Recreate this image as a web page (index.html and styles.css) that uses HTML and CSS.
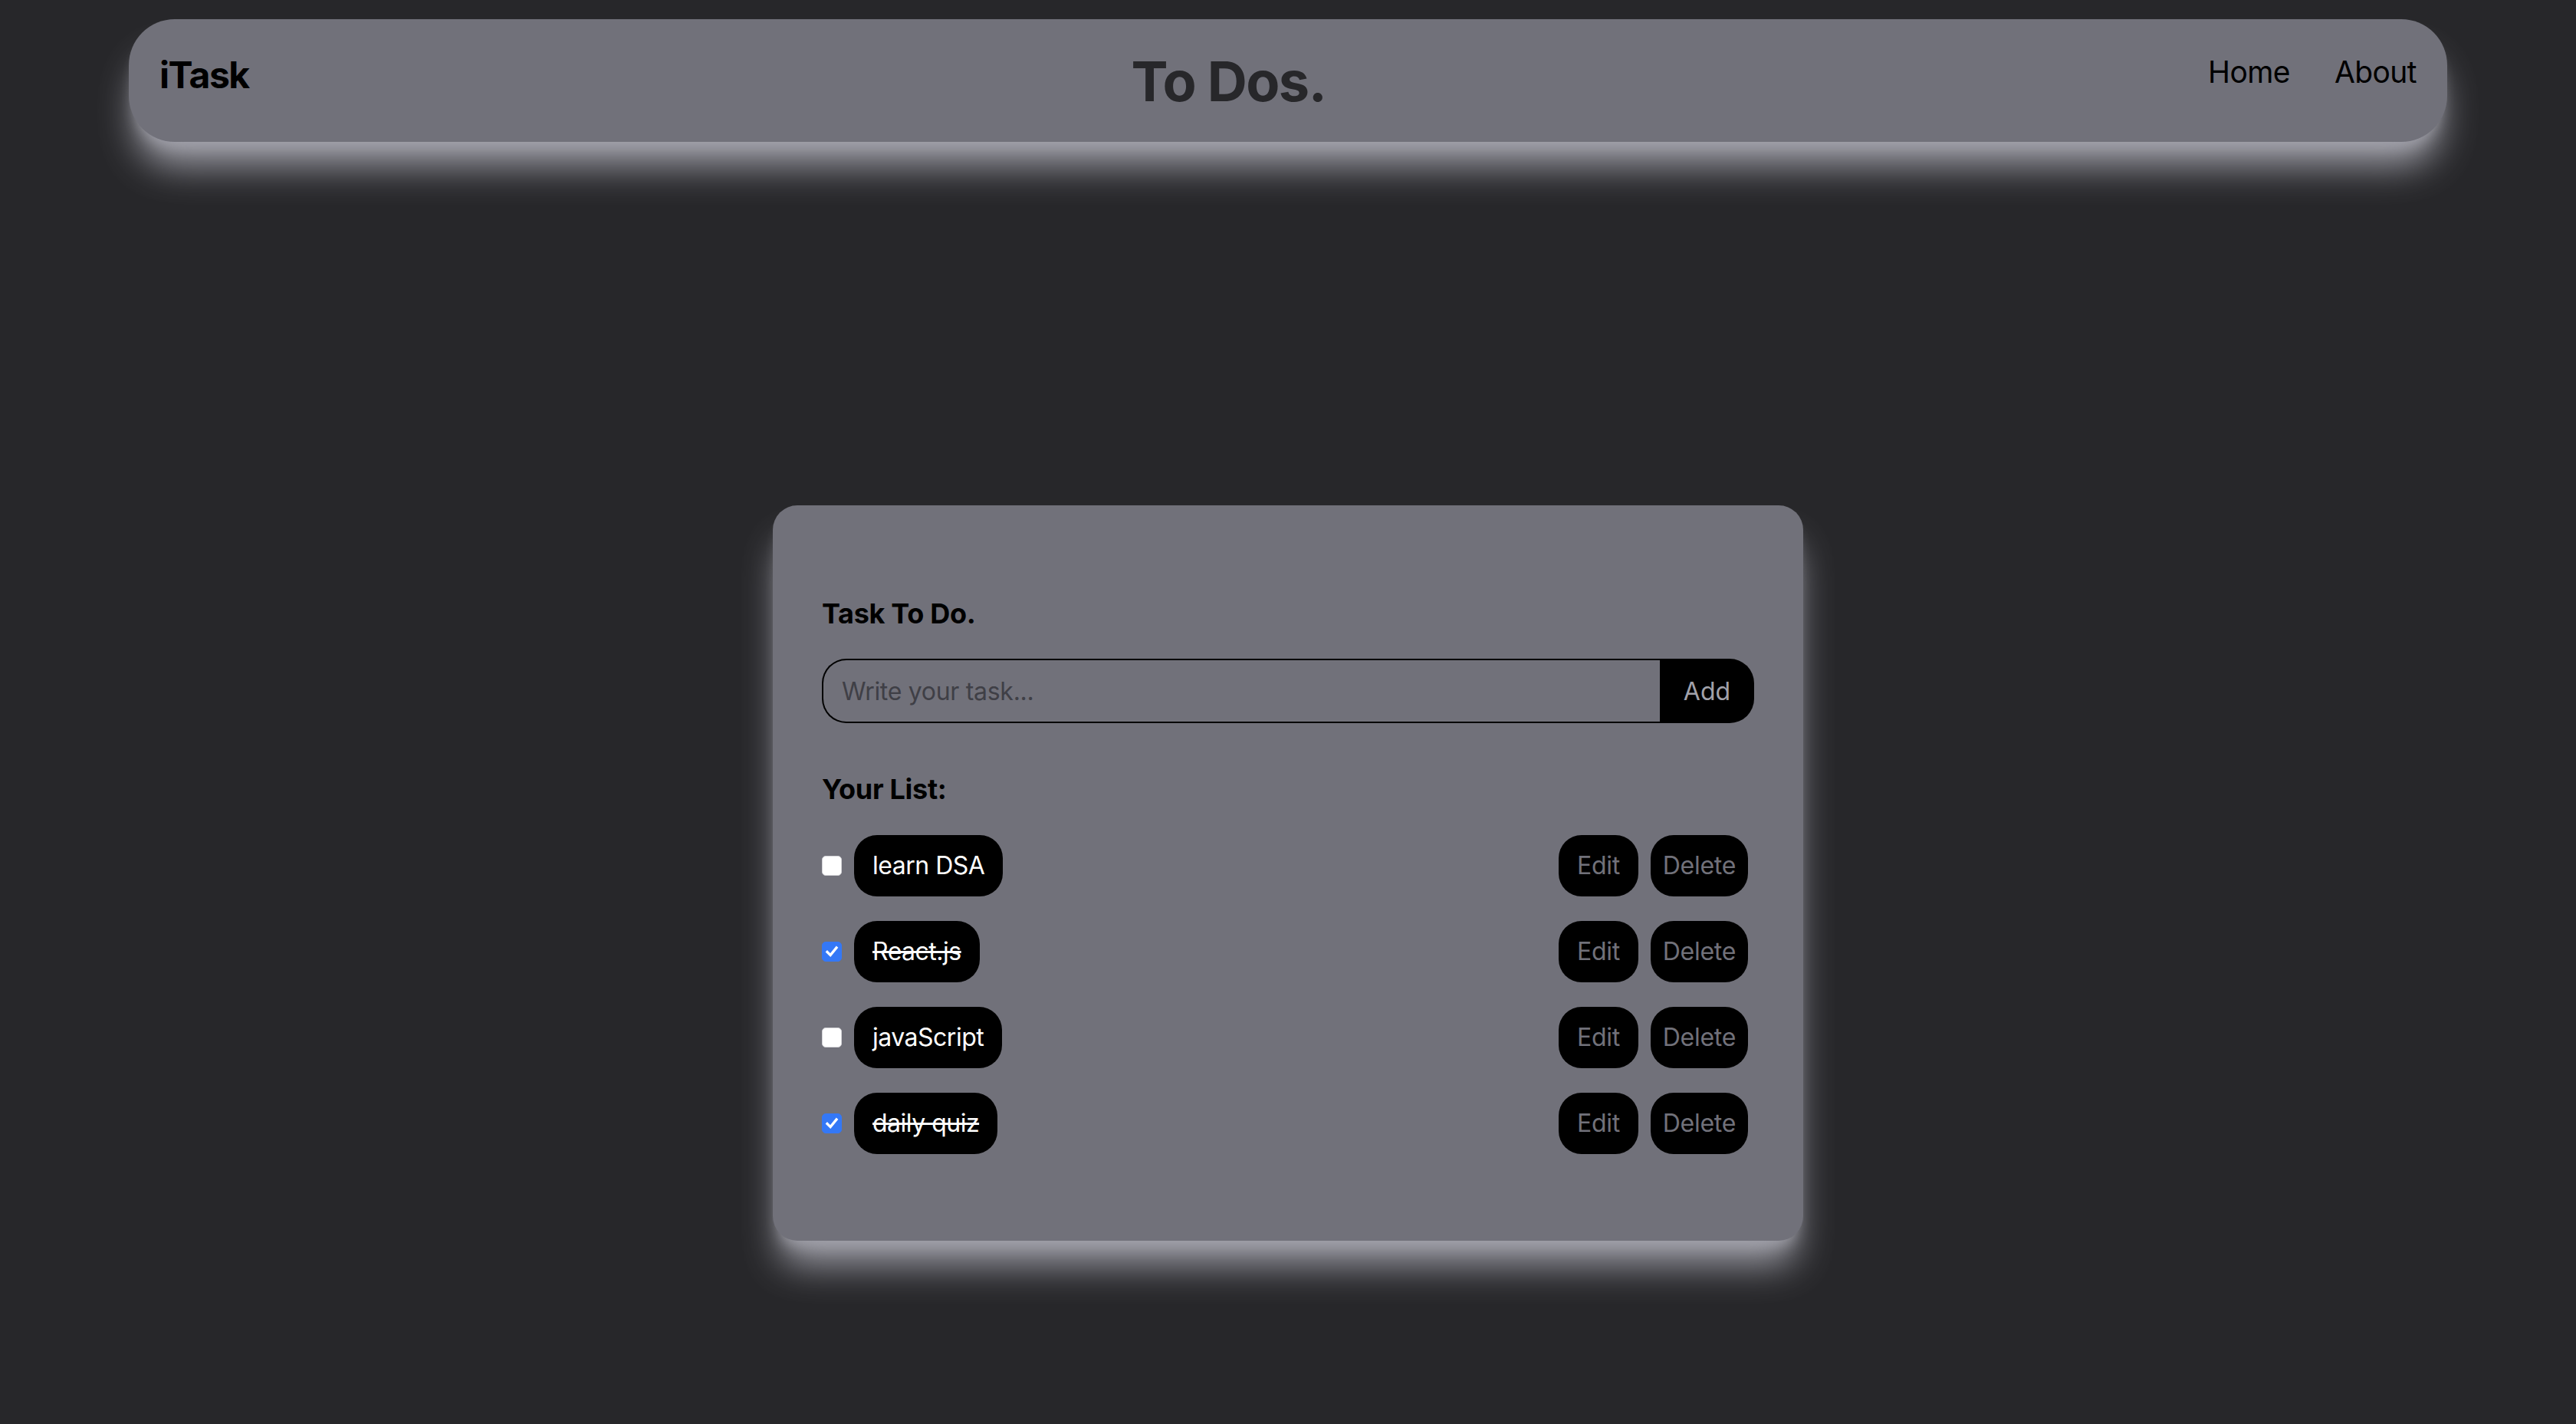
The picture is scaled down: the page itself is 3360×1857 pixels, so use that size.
FILE: index.html
```html
<!DOCTYPE html>
<html lang="en">
<head>
<meta charset="utf-8">
<title>iTask - To Dos.</title>
<link rel="stylesheet" href="styles.css">
</head>
<body>
<header class="nav">
  <div class="brand">iTask</div>
  <h1 class="title">To Dos.</h1>
  <nav class="links">
    <a href="#" class="link">Home</a>
    <a href="#" class="link">About</a>
  </nav>
</header>

<main class="card">
  <h2 class="heading task-heading">Task To Do.</h2>
  <form class="add-form">
    <input class="task-input" type="text" placeholder="Write your task...">
    <button class="add-btn" type="button">Add</button>
  </form>

  <h2 class="heading list-heading">Your List:</h2>
  <ul class="todo-list">
    <li class="todo">
      <span class="check"></span>
      <span class="pill">learn DSA</span>
      <div class="actions">
        <button class="btn edit" type="button">Edit</button>
        <button class="btn delete" type="button">Delete</button>
      </div>
    </li>
    <li class="todo done">
      <span class="check checked"><svg viewBox="0 0 26 26" class="tick"><path d="M6.5 13.5 L11 18 L19.5 7.5"/></svg></span>
      <span class="pill">React.js</span>
      <div class="actions">
        <button class="btn edit" type="button">Edit</button>
        <button class="btn delete" type="button">Delete</button>
      </div>
    </li>
    <li class="todo">
      <span class="check"></span>
      <span class="pill">javaScript</span>
      <div class="actions">
        <button class="btn edit" type="button">Edit</button>
        <button class="btn delete" type="button">Delete</button>
      </div>
    </li>
    <li class="todo done">
      <span class="check checked"><svg viewBox="0 0 26 26" class="tick"><path d="M6.5 13.5 L11 18 L19.5 7.5"/></svg></span>
      <span class="pill">daily quiz</span>
      <div class="actions">
        <button class="btn edit" type="button">Edit</button>
        <button class="btn delete" type="button">Delete</button>
      </div>
    </li>
  </ul>
</main>
</body>
</html>
```

FILE: styles.css
```css
html, body {
  margin: 0;
  padding: 0;
}

body {
  background: #27272a;
  min-height: 100vh;
  font-family: Inter, "Liberation Sans", Arial, sans-serif;
  color: #000;
  overflow: hidden;
}

/* ---------- navbar ---------- */
.nav {
  width: 90%;
  height: 160px;
  margin: 25px auto 0;
  box-sizing: border-box;
  padding: 41px 40px 0 40px;
  background: #71717a;
  border-radius: 60px;
  display: flex;
  justify-content: space-between;
  align-items: flex-start;
  box-shadow: 0 40px 50px -10px #a1a1aa, 0 16px 20px -12px #a1a1aa;
}

.brand {
  font-size: 48px;
  line-height: 64px;
  font-weight: 700;
  letter-spacing: -1.5px;
}

.title {
  margin: 0;
  font-size: 72px;
  line-height: 80px;
  font-weight: 700;
  color: #27272a;
  letter-spacing: -1.5px;
}

.links {
  display: flex;
  gap: 58px;
}

.link {
  color: #000;
  text-decoration: none;
  font-size: 39px;
  line-height: 56px;
  letter-spacing: -0.6px;
}

/* ---------- card ---------- */
.card {
  width: 40%;
  margin: 474px auto 0;
  box-sizing: border-box;
  padding: 113px 64px 113px;
  background: #71717a;
  border-radius: 32px;
  box-shadow: 0 40px 50px -10px #a1a1aa, 0 16px 20px -12px #a1a1aa;
}

.heading {
  margin: 0;
  font-size: 36px;
  line-height: 56px;
  font-weight: 700;
  color: #000;
  letter-spacing: -0.3px;
}

.add-form {
  display: flex;
  height: 84px;
  margin: 31px 0 0;
}

.task-input {
  flex: 1;
  min-width: 0;
  box-sizing: border-box;
  height: 84px;
  border: 2px solid #000;
  border-right: none;
  border-radius: 32px 0 0 32px;
  background: transparent;
  padding: 0 24px;
  font-family: inherit;
  font-size: 32px;
  letter-spacing: -0.3px;
  color: #000;
  outline: none;
}

.task-input::placeholder {
  color: #3f3f46;
}

.add-btn {
  width: 123px;
  height: 84px;
  border: none;
  border-radius: 0 32px 32px 0;
  background: #000;
  color: #a1a1aa;
  font-family: inherit;
  font-size: 32px;
  padding: 0;
}

.list-heading {
  margin-top: 58px;
}

/* ---------- list ---------- */
.todo-list {
  list-style: none;
  margin: 32px 0 0;
  padding: 0;
  display: flex;
  flex-direction: column;
  gap: 32px;
}

.todo {
  display: flex;
  align-items: center;
  height: 80px;
}

.check {
  width: 26px;
  height: 26px;
  box-sizing: border-box;
  flex: none;
  margin-right: 16px;
  background: #fff;
  border: 1px solid #d4d4d8;
  border-radius: 5px;
  display: flex;
}

.check.checked {
  background: #3478f6;
  border-color: #3478f6;
}

.tick {
  width: 100%;
  height: 100%;
}

.tick path {
  fill: none;
  stroke: #fff;
  stroke-width: 3.6;
  stroke-linecap: square;
  stroke-linejoin: miter;
}

.pill {
  background: #000;
  color: #fff;
  border-radius: 30px;
  padding: 16px 24px;
  font-size: 32px;
  line-height: 48px;
  letter-spacing: -0.5px;
}

.done .pill {
  text-decoration: line-through;
  text-decoration-thickness: 3px;
}

.actions {
  margin-left: auto;
  display: flex;
}

.btn {
  height: 80px;
  margin: 0 8px;
  border: none;
  border-radius: 30px;
  background: #000;
  color: #71717a;
  font-family: inherit;
  font-size: 32px;
  line-height: 48px;
  letter-spacing: -0.3px;
}

.edit {
  padding: 0 24px;
}

.delete {
  padding: 0 16px;
}
```
